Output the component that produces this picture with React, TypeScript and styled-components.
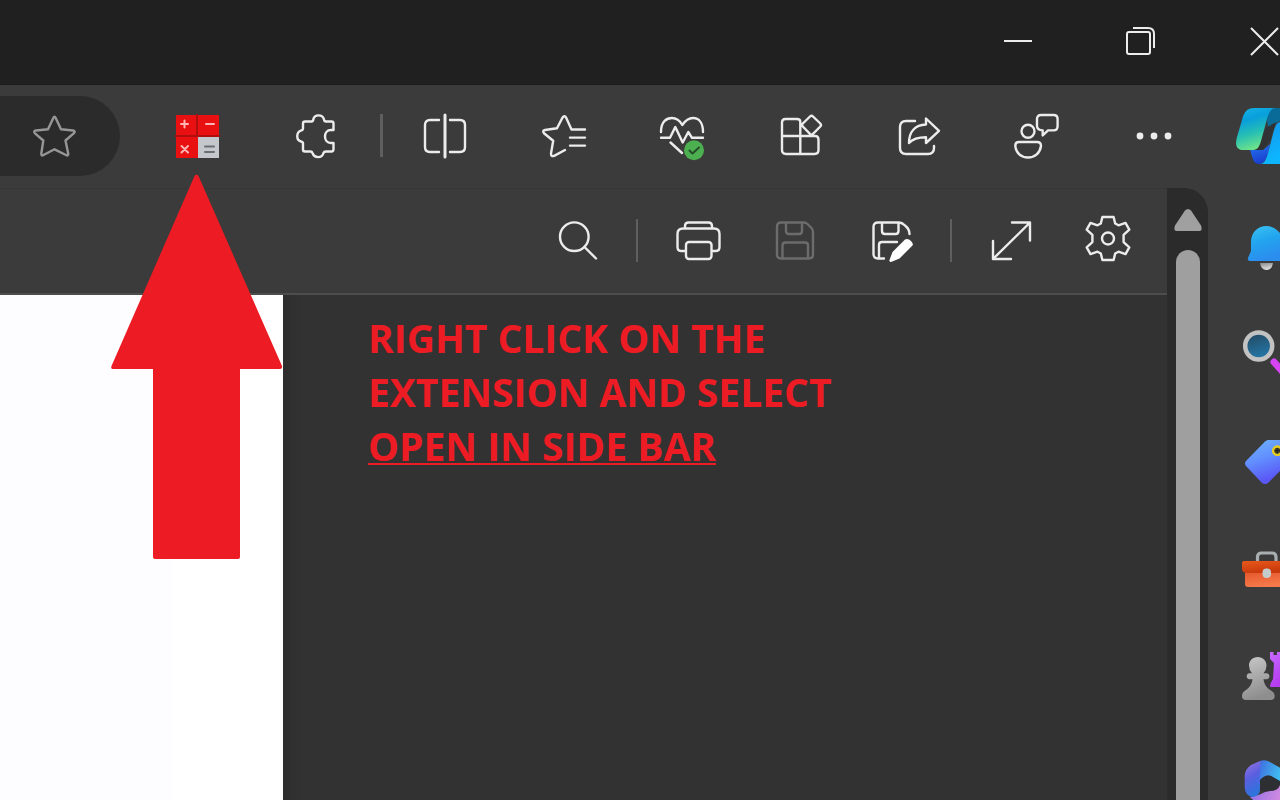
import React from "react";
import styled, { createGlobalStyle } from "styled-components";

const GlobalStyle = createGlobalStyle`
  * { box-sizing: border-box; }
  body { margin: 0; background: #323232; font-family: "Open Sans", "Noto Sans", sans-serif; }
`;

const Shell = styled.div`
  display: flex;
  flex-direction: column;
  height: 100vh;
  overflow: hidden;
`;

const TitleBar = styled.header`
  display: flex;
  flex: 0 0 85px;
  align-items: center;
  justify-content: flex-end;
  gap: 91px;
  background: #202020;
  border-bottom: 1px solid #1b1b1b;
`;

const Workspace = styled.div`
  display: flex;
  flex: 1;
  min-height: 0;
  background: #3b3b3b;
`;

const MainColumn = styled.div`
  display: flex;
  flex: 1;
  flex-direction: column;
  min-width: 0;
`;

const BrowserBar = styled.nav`
  display: flex;
  flex: 0 0 103px;
  align-items: center;
  gap: 23px;
  padding: 0 14px 2px 0;
`;

const AddressEnd = styled.div`
  display: flex;
  flex: 1;
  justify-content: flex-end;
  align-items: center;
  height: 80px;
  margin-right: 14px;
  padding-right: 26px;
  border-radius: 0 40px 40px 0;
  background: #2b2b2b;
`;

const Group = styled.div<{ $gap: number }>`
  display: flex;
  align-items: center;
  gap: ${(p) => p.$gap}px;
`;

const IconButton = styled.button<{ $width: number; $height?: number; $color?: string }>`
  display: flex;
  flex: none;
  align-items: center;
  justify-content: center;
  width: ${(p) => p.$width}px;
  height: ${(p) => p.$height ?? 80}px;
  padding: 0;
  border: 0;
  background: none;
  color: ${(p) => p.$color ?? "#ececec"};
  svg { display: block; flex: none; overflow: visible; }
`;

const Divider = styled.span<{ $width: number }>`
  width: ${(p) => p.$width}px;
  height: 43px;
  background: #5f5f5f;
`;

const ArrowAnchor = styled.div`
  position: relative;
`;

const Arrow = styled.svg`
  position: absolute;
  z-index: 2;
  top: 78px;
  left: -46px;
  pointer-events: none;
`;

const Viewer = styled.div`
  display: flex;
  flex: 1;
  min-height: 0;
`;

const Reader = styled.main`
  display: flex;
  flex: 1;
  flex-direction: column;
  min-width: 0;
`;

const PdfBar = styled.div`
  display: flex;
  flex: 0 0 107px;
  align-items: center;
  justify-content: flex-end;
  gap: 23px;
  padding: 0 23px 2px 0;
  border-top: 1px solid #373737;
  border-bottom: 2px solid #4d4d4d;
`;

const Document = styled.div`
  display: flex;
  flex: 1;
  min-height: 0;
`;

const Sheet = styled.section`
  flex: 1;
  background: linear-gradient(to left, #ffffff 111px, #fdfcff 112px);
`;

const Notes = styled.section`
  flex: 0 0 884px;
  padding: 16px 85px;
  background: linear-gradient(to right, #2d2d2d, #323232 18px);
`;

const Instruction = styled.p`
  width: 500px;
  margin: 0;
  color: #ed1c24;
  font-size: 39px;
  font-weight: 700;
  line-height: 54px;
`;

const Underlined = styled.span`
  display: block;
  text-decoration: underline;
  text-decoration-thickness: 2px;
  text-underline-offset: 2px;
  text-decoration-skip-ink: none;
`;

const ScrollTrack = styled.div`
  display: flex;
  flex: 0 0 41px;
  flex-direction: column;
  align-items: center;
  border-radius: 0 24px 0 0;
  background: #2b2b2b;
`;

const ScrollThumb = styled.div`
  flex: 1;
  width: 24px;
  border-radius: 12px 12px 0 0;
  background: #9f9f9f;
`;

const SideBar = styled.aside`
  display: flex;
  flex: 0 0 72px;
  flex-direction: column;
  align-items: flex-end;
  gap: 44px;
  padding-top: 19px;
  overflow: hidden;
`;

type IconProps = { children: React.ReactNode; weight?: number };

const Glyph = ({ children, weight = 2.4 }: IconProps) => (
  <svg width="48" height="48" viewBox="0 0 48 48" fill="none" stroke="currentColor" strokeWidth={weight} strokeLinecap="round" strokeLinejoin="round" aria-hidden="true">
    {children}
  </svg>
);

const WindowGlyph = ({ children }: IconProps) => (
  <svg width="32" height="32" viewBox="0 0 32 32" fill="none" stroke="currentColor" strokeWidth="2" aria-hidden="true">
    {children}
  </svg>
);

const SideGlyph = ({ children }: IconProps) => (
  <svg width="48" height="64" viewBox="0 0 48 64" fill="none" aria-hidden="true">
    {children}
  </svg>
);

const Fade = ({ id, stops, flat }: { id: string; stops: string[]; flat?: boolean }) => (
  <linearGradient id={id} x1="0" y1="0" x2={flat ? "1" : "0.3"} y2={flat ? "0.3" : "1"}>
    {stops.map((color, i) => (
      <stop key={color} offset={i / (stops.length - 1)} stopColor={color} />
    ))}
  </linearGradient>
);

const browserTools = [
  {
    label: "Split screen",
    icon: (
      <>
        <path d="M17 8H8Q3 8 3 13V35Q3 40 8 40H17M28 8H38Q43 8 43 13V35Q43 40 38 40H28" />
        <path d="M23 3V45" strokeWidth="3" />
      </>
    ),
  },
  {
    label: "Favorites",
    icon: (
      <path d="M45 17.5H31.5L26.3 6Q24.5 2.5 22.3 6L17 16.2L5 18Q2 18.8 4 21.2L13.2 28.8L11 41.5Q11 45.4 14.6 43.6L25 38M30 25.6H45M30 33.6H45" />
    ),
  },
  {
    label: "Browser essentials",
    icon: (
      <>
        <path d="M3 20C3 9 9 6 14 6C19 6 22 9 24.3 13C27 9 30 6 35 6C41 6 45 11 45 20M3 25.8H12L17.3 15L24.7 30.5L30.3 20L34 25.8H45M12.5 30.5L24 41" />
        <circle cx="36" cy="38.3" r="10" fill="#4caf50" stroke="none" />
        <path d="M31.5 38.5L34.5 41.5L41 35.5" stroke="#264d2a" strokeWidth="2" />
      </>
    ),
  },
  {
    label: "Apps",
    icon: (
      <path d="M24.3 24V42M6 24H39Q42.5 24 42.5 27.5V38Q42.5 42 38.5 42H10Q6 42 6 38V10.5Q6 7 9.5 7H21Q24.3 7 24.3 10V24M34 4.5Q35.5 3 37 4.5L44.3 11.5Q45.7 13 44.3 14.5L37 21.8Q35.5 23.2 34 21.8L26.8 14.5Q25.4 13 26.8 11.5Z" />
    ),
  },
  {
    label: "Share",
    icon: (
      <path d="M21 9H12Q6 9 6 15V36Q6 42 12 42H34Q40 42 40 36V34M32 6.5L45 18.8L32 31V25.2C24 25.2 19 26.5 15 31C15 20 21 13 32 12.5Z" />
    ),
  },
  {
    label: "Feedback",
    icon: (
      <>
        <circle cx="16" cy="19.2" r="6.5" />
        <path d="M7 30H25Q29 30 29 34C28 41 23 45.5 16 45.5S4 41 3.3 34Q3.3 30 7 30ZM29 3H41.5Q45.6 3 45.6 7V14Q45.6 18.4 41.5 18.4H36L30.7 23.5V18.4Q25 18 25 14V7Q25 3 29 3Z" />
      </>
    ),
  },
  {
    label: "Settings and more",
    icon: (
      <g fill="currentColor" stroke="none">
        <circle cx="10" cy="24" r="3.4" />
        <circle cx="24" cy="24" r="3.4" />
        <circle cx="38" cy="24" r="3.4" />
      </g>
    ),
  },
];

const sideApps = [
  {
    label: "Copilot",
    icon: (
      <>
        <defs>
          <Fade id="leaf" stops={["#18b4e6", "#089fdc", "#28bfb2", "#6be28c"]} />
          <Fade id="wave" stops={["#1593e8", "#0db5ff"]} />
          <Fade id="fold" stops={["#2476f0", "#1a3fd0"]} />
        </defs>
        <path d="M36 4H48V17C43 19 41 22 38 30L35 17Z" fill="#096c98" />
        <path d="M34 24L44 18L38 36L31 46H24Z" fill="#303234" />
        <path d="M18 46H31L38 40C36 52 33 60 27 60C20 60 20 50 18 46Z" fill="url(#fold)" />
        <path d="M48 18C44 19 43 23 41.5 28L36 49C34 56 32 60 28 60H48Z" fill="url(#wave)" />
        <path d="M22 4H44C39 4 37 8 35 15L29 37C27 44 25 46 20 46H11C4 46 3 40 5 33L10 16C12 8 15 4 22 4Z" fill="url(#leaf)" />
      </>
    ),
  },
  {
    label: "Notifications",
    icon: (
      <>
        <defs>
          <Fade id="bell" stops={["#3cc4f2", "#22a5ee", "#2b8eef"]} />
          <Fade id="clapper" stops={["#8a8a8a", "#e0e0e0"]} />
        </defs>
        <path d="M28 51H41Q40 58 34.5 58T28 51Z" fill="url(#clapper)" />
        <path d="M34.5 14C25 14 19 21 19 30V39L16 46Q15 49 18 49H48V21C45 17 40 14 34.5 14Z" fill="url(#bell)" />
      </>
    ),
  },
  {
    label: "Search",
    icon: (
      <>
        <defs>
          <Fade id="lens" stops={["#24455c", "#2376a6"]} />
        </defs>
        <path d="M42 42L51 52" stroke="#d744f5" strokeWidth="7" strokeLinecap="round" />
        <circle cx="26.7" cy="26" r="13.5" fill="url(#lens)" stroke="#c2c2c2" strokeWidth="4.5" />
      </>
    ),
  },
  {
    label: "Shopping",
    icon: (
      <>
        <defs>
          <Fade id="tag" stops={["#6fb6ff", "#6290ff", "#5a57f5"]} />
        </defs>
        <path d="M36 12H50V41L36 55Q33 57 30 55L14 38Q12 35.5 14 33L33 13.5Q34.5 12 36 12Z" fill="url(#tag)" />
        <circle cx="45.3" cy="22.7" r="4.2" fill="#4c4826" stroke="#e9ce20" strokeWidth="2.4" />
        <path d="M45.3 20V25.4M42.6 22.7H48" stroke="#222" strokeWidth="1.2" />
      </>
    ),
  },
  {
    label: "Tools",
    icon: (
      <>
        <defs>
          <Fade id="lid" stops={["#e8581c", "#c93a0c"]} />
          <Fade id="box" stops={["#e4572b", "#f5794a"]} />
        </defs>
        <path d="M25.5 26V21Q25.5 17 29.5 17H40Q44 17 44 21V26" stroke="#a9aeb0" strokeWidth="3.2" />
        <path d="M13 36H48V51H16Q13 51 13 48Z" fill="url(#box)" />
        <path d="M12 25H48V37H14Q10 36 10 33V27Q10 25 12 25Z" fill="url(#lid)" />
        <rect x="30.5" y="32.5" width="8.5" height="9.5" rx="4" fill="#c3cccd" />
      </>
    ),
  },
  {
    label: "Games",
    icon: (
      <>
        <defs>
          <Fade id="pawn" stops={["#c9c9c9", "#8e8e8e"]} />
          <Fade id="rook" stops={["#c76bff", "#b63cf0"]} />
        </defs>
        <path d="M38 8H41.5V11H45V8H50V43H38Q38 39 41 35L42 19L38 15Z" fill="url(#rook)" />
        <path d="M25.7 13C31 13 34.5 17 34.5 21.5Q34.5 26 31.5 29.3H35Q37.5 30 37.5 32.3T35 35.3H31.5Q32 42 38 46Q42.7 48 42.7 52Q42.7 56 38.5 56H14Q10 56 10 52T14 46Q20 42 20.5 35.3H17.500Q14.7 35 14.7 32.3T17.5 29.3H20Q17 26 17 21.5C17 17 20.5 13 25.7 13Z" fill="url(#pawn)" />
      </>
    ),
  },
  {
    label: "Microsoft 365",
    icon: (
      <>
        <defs>
          <Fade id="ribbonLeft" stops={["#9b76df", "#5b5fe0", "#2f73dc"]} />
          <Fade id="ribbonTop" stops={["#3f6de0", "#41bdf0"]} flat />
          <Fade id="ribbonBottom" stops={["#8c70e8", "#d28be0"]} flat />
        </defs>
        <path d="M28 9Q33 7 38 10L50 17V31L39 24Q33 22 28 30Z" fill="url(#ribbonTop)" />
        <path d="M18 45Q30 43 36 38L50 31V64H38Z" fill="url(#ribbonBottom)" />
        <path d="M28 28Q33 22 39 24L48 29V33Q46 39 38 39Q32 41 28 38Z" fill="#2d2f33" />
        <path d="M28 9Q29 12 28 16V38Q27 45 20 45Q13 43 12.7 35V24Q13 17 19 13Z" fill="url(#ribbonLeft)" />
      </>
    ),
  },
];

// One quarter of the cog, clockwise from its top tooth; the rest is mirrored.
const cogQuarter = [[5.6, -21.5], [7.2, -15], [10.5, -13.2], [17.5, -15.6], [21.3, -8.8], [15.6, -3.6]];
const cogHalf = [...cogQuarter, ...cogQuarter.map(([x, y]) => [x, -y]).reverse()];
const gearPoints = [...cogHalf, ...cogHalf.map(([x, y]) => [-x, y]).reverse()]
  .map(([x, y]) => `${24 + x},${22.5 + y}`)
  .join(" ");

export default function App() {
  return (
    <Shell>
      <GlobalStyle />
      <TitleBar>
        <IconButton $width={32} aria-label="Minimize">
          <WindowGlyph><path d="M2 15H30" /></WindowGlyph>
        </IconButton>
        <IconButton $width={32} aria-label="Restore">
          <WindowGlyph>
            <rect x="2" y="6" width="23" height="22" rx="2" />
            <path d="M8 2H23Q29 2 29 8V22" />
          </WindowGlyph>
        </IconButton>
        <IconButton $width={32} aria-label="Close">
          <WindowGlyph><path d="M3 2L30 29M30 2L3 29" /></WindowGlyph>
        </IconButton>
      </TitleBar>

      <Workspace>
        <MainColumn>
          <BrowserBar aria-label="Browser toolbar">
            <AddressEnd>
              <IconButton $width={80} $color="#969696" aria-label="Add to favorites">
                <Glyph>
                  <path d="M23.3 6Q24.5 3.5 25.7 6L31 17.3L43 18.5Q46 19 43.7 21.3L35.5 28.5L38.2 41.5Q38.5 44.5 36 43L24.5 37.3L13.5 43Q11 44.5 11.3 41.5L13.3 28.5L5 21.3Q3 19 6 18.5L18 17.3Z" />
                </Glyph>
              </IconButton>
            </AddressEnd>
            <Group $gap={40}>
              <ArrowAnchor>
                <IconButton $width={80} aria-label="Calculator extension">
                  <Glyph weight={2}>
                    <g stroke="none">
                      <path d="M3 3H46V46H3Z" fill="#e81010" />
                      <path d="M24 3V24M3 24H46" stroke="#b00d0d" strokeWidth="2" />
                      <path d="M25 25H46V46H25Z" fill="#c4c7cc" />
                    </g>
                    <path d="M11.5 8.5V15.5M8 12H15M33 12H41" stroke="#ffb4b4" />
                    <path d="M8.500 34L15 40.500M15 34L8.500 40.500" stroke="#ffb4b4" />
                    <path d="M32 34.500H41M32 40H41" stroke="#6b6e72" />
                  </Glyph>
                </IconButton>
                <Arrow width="172" height="385" viewBox="0 0 172 385" aria-hidden="true">
                  <path d="M83.5 2Q85.5 -1 87.5 2L171 192Q171.5 195 169 195H129V383Q129 385 127 385H44Q42 385 42 383V195H2Q-0.5 195 0.5 192Z" fill="#ed1c24" />
                </Arrow>
              </ArrowAnchor>
              <IconButton $width={80} aria-label="Extensions">
                <Glyph>
                  <path d="M12 9.5H18.5Q20 9.5 20.3 7.5C21.5 2 29.5 2 31 7.5Q31.3 9.5 33 9.5H38.5Q40.5 9.5 40.5 11.5V18H38C30 18 30 31 38 31H40.5V37Q40.5 39.5 38.5 39.5H33Q31 39.5 30.5 41C29 46.5 21.5 46.5 19.5 41Q19 39.5 17.5 39.5H12Q10 39.5 10 37.5V31.5Q10 30 8 29.5C3 28 3 20.5 8 18.5Q10 18 10 16.5V11.5Q10 9.5 12 9.5Z" />
                </Glyph>
              </IconButton>
            </Group>
            <Divider $width={3} />
            <Group $gap={38}>
              {browserTools.map((tool) => (
                <IconButton key={tool.label} $width={80} aria-label={tool.label}>
                  <Glyph>{tool.icon}</Glyph>
                </IconButton>
              ))}
            </Group>
          </BrowserBar>

          <Viewer>
            <Reader>
              <PdfBar>
                <IconButton $width={72} aria-label="Find">
                  <Glyph><circle cx="21.3" cy="20.7" r="14.3" /><path d="M31.5 31L43 42.5" /></Glyph>
                </IconButton>
                <Divider $width={2} />
                <Group $gap={25}>
                  <IconButton $width={72} aria-label="Print">
                    <Glyph>
                      <path d="M12 12V10Q12 6.500 15.500 6.500H35.500Q39 6.500 39 10V12M12 35H8Q4.500 35 4.500 31V18Q4.500 12.500 10 12.500H41Q46.500 12.500 46.500 18V31Q46.500 35 43 35H39" />
                      <rect x="13" y="26" width="25.5" height="17" rx="3" />
                    </Glyph>
                  </IconButton>
                  <IconButton $width={72} $color="#6c6c6c" disabled aria-label="Save">
                    <Glyph>
                      <path d="M11 6.500H34Q36 6.500 37.500 8L41.500 12Q43 13.500 43 16V38.500Q43 42.500 39 42.500H11Q7 42.500 7 38.500V10.500Q7 6.500 11 6.500ZM16 7V15Q16 18 19 18H29Q32 18 32 15V7M12.500 42V29.500Q12.500 26.500 15.500 26.500H35Q38 26.500 38 29.500V42" />
                    </Glyph>
                  </IconButton>
                  <IconButton $width={72} aria-label="Save as">
                    <Glyph>
                      <path d="M17 42.500H11Q6.500 42.500 6.500 38V11Q6.500 6.500 11 6.500H32Q35 6.500 38 9.500Q42.500 13 42.500 18M15 7V15Q15 18 18 18H28.500Q31.500 18 31.500 15V7M12 42V29Q12 26 15 26H30" />
                      <path d="M25.500 36L38 23.500Q41 22 44 25T45 30L32.500 42.500L24 46Q22 46 22.500 44Z" fill="#ffffff" stroke="none" />
                    </Glyph>
                  </IconButton>
                </Group>
                <Divider $width={2} />
                <Group $gap={25}>
                  <IconButton $width={72} aria-label="Enter full screen">
                    <Glyph><path d="M6 43L43 6.500M25 6.500H43V24.500M6 25V43H24" /></Glyph>
                  </IconButton>
                  <IconButton $width={72} aria-label="Settings">
                    <Glyph>
                      <polygon points={gearPoints} />
                      <circle cx="24" cy="22.5" r="6" />
                    </Glyph>
                  </IconButton>
                </Group>
              </PdfBar>
              <Document>
                <Sheet aria-label="Document page" />
                <Notes>
                  <Instruction>
                    RIGHT CLICK ON THE EXTENSION AND SELECT <Underlined>OPEN IN SIDE BAR</Underlined>
                  </Instruction>
                </Notes>
              </Document>
            </Reader>
            <ScrollTrack>
              <IconButton $width={41} $height={62} $color="#a0a0a0" aria-label="Scroll up">
                <svg width="30" height="24" viewBox="0 0 30 24" aria-hidden="true">
                  <path d="M12 3.5Q15 0.5 18 3.5L28 18.5Q30 24 26 24H4Q0 24 2 18.5Z" fill="currentColor" />
                </svg>
              </IconButton>
              <ScrollThumb />
            </ScrollTrack>
          </Viewer>
        </MainColumn>

        <SideBar>
          {sideApps.map((app) => (
            <IconButton key={app.label} $width={48} $height={64} aria-label={app.label}>
              <SideGlyph>{app.icon}</SideGlyph>
            </IconButton>
          ))}
        </SideBar>
      </Workspace>
    </Shell>
  );
}
